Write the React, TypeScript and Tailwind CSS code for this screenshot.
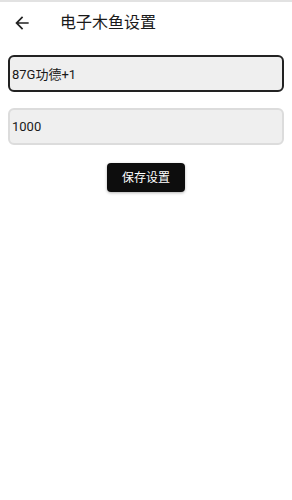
import { useState } from "react";

const font = { fontFamily: "Roboto, 'Noto Sans CJK SC', sans-serif" };

function BackArrow() {
  return (
    <svg viewBox="0 0 24 24" className="w-[20px] h-[20px]" fill="#222">
      <path d="M20 11H7.83l5.59-5.59L12 4l-8 8 8 8 1.41-1.41L7.83 13H20v-2z" />
    </svg>
  );
}

export default function App() {
  const [name, setName] = useState("87G功德+1");
  const [count, setCount] = useState("1000");

  return (
    <div className="w-[292px] h-[500px] bg-white border-t-2 border-[#e2e2e2]" style={font}>
      <div className="flex items-center h-[42px] pl-[12px]">
        <BackArrow />
        <span className="ml-[28px] text-[16px] text-[#1a1a1a]">电子木鱼设置</span>
      </div>
      <div className="px-[8px] pt-[11px] flex flex-col gap-[16px]">
        <input
          value={name}
          onChange={(e) => setName(e.target.value)}
          className="h-[37px] w-full rounded-[6px] border-2 border-[#222] bg-[#efefef] px-[2px] text-[13px] text-[#1a1a1a] outline-none"
        />
        <input
          value={count}
          onChange={(e) => setCount(e.target.value)}
          className="h-[37px] w-full rounded-[6px] border-2 border-[#dcdcdc] bg-[#efefef] px-[2px] text-[13px] text-[#1a1a1a] outline-none"
        />
      </div>
      <div className="flex justify-center pt-[18px]">
        <button className="w-[78px] h-[29px] rounded-[4px] bg-[#0d0d0d] text-white text-[12px] shadow-[0_1px_3px_rgba(0,0,0,0.3)]">
          保存设置
        </button>
      </div>
    </div>
  );
}
